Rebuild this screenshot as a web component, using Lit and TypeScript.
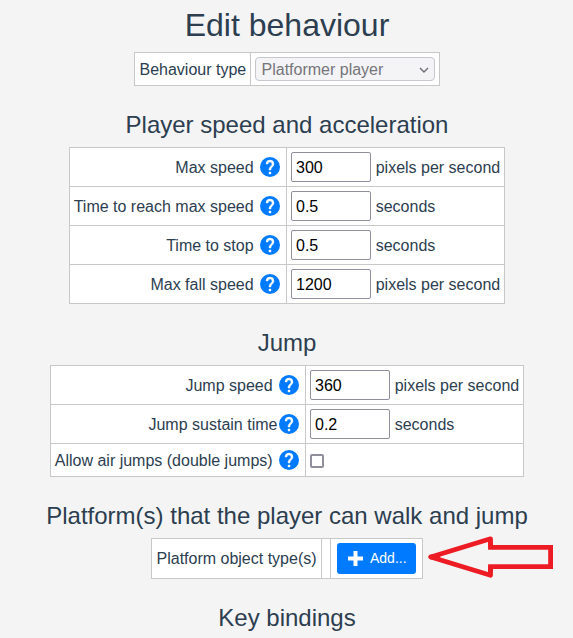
import { LitElement, html, css, svg, nothing } from "lit";
import { customElement } from "lit/decorators.js";
import { classMap } from "lit/directives/class-map.js";

interface Row {
  label: string;
  value?: string;
  unit?: string;
  tight?: boolean;
}

const speedRows: Row[] = [
  { label: "Max speed", value: "300", unit: "pixels per second" },
  { label: "Time to reach max speed", value: "0.5", unit: "seconds" },
  { label: "Time to stop", value: "0.5", unit: "seconds" },
  { label: "Max fall speed", value: "1200", unit: "pixels per second" },
];

const jumpRows: Row[] = [
  { label: "Jump speed", value: "360", unit: "pixels per second" },
  { label: "Jump sustain time", value: "0.2", unit: "seconds", tight: true },
  { label: "Allow air jumps (double jumps)" },
];

@customElement("app-root")
export class AppRoot extends LitElement {
  static styles = css`
    :host {
      display: block;
      box-sizing: border-box;
      position: relative;
      height: 638px;
      overflow: hidden;
      padding-left: 1px;
      background: #f4f4f4;
      color: #2c3e50;
      font: 16px/20px "Liberation Sans", Arial, sans-serif;
      white-space: nowrap;
    }
    * { box-sizing: border-box; }
    .page { display: flex; flex-direction: column; align-items: center; }
    h1, h2 { margin: 0; font-weight: 400; }
    h1 { height: 52px; font-size: 32px; line-height: 50px; }
    h2 { height: 32px; margin-top: 29px; font-size: 24px; line-height: 20px; }
    .sheet {
      display: grid;
      gap: 1px;
      padding: 1px;
      background: #c8c8c8;
    }
    .type { grid-template-columns: 115px 188px; grid-template-rows: 32px; }
    .speed { grid-template-columns: 216px 217px; grid-auto-rows: 38px; }
    .jump { grid-template-columns: 254px 217px; grid-template-rows: 38px 38px 32px; }
    .platform { grid-template-columns: 169px 8px 91px; grid-template-rows: 39px; }
    .cell { display: flex; align-items: center; background: #fff; padding-left: 4px; }
    .text { padding-top: 2px; }
    .name { padding-left: 4.5px; }
    .label { justify-content: flex-end; padding-right: 6px; gap: 6.4px; }
    .label.tight { gap: 1.6px; }
    .help { width: 20px; height: 20px; flex: none; display: block; }
    .field {
      width: 80px;
      height: 30px;
      margin: 0 4.7px 0 0;
      padding: 2px 0 0 4px;
      border: 1px solid #8f8f9d;
      border-radius: 2px;
      background: #fff;
      color: #000;
      font: inherit;
      outline: 0;
    }
    .check {
      appearance: none;
      width: 14px;
      height: 14px;
      margin: 2px 0 0;
      border: 2px solid #8f8f9d;
      border-radius: 2px;
      background: #fff;
    }
    .select {
      display: flex;
      align-items: center;
      justify-content: space-between;
      width: 180px;
      height: 24px;
      padding: 0 5px 0 5.5px;
      border: 1px solid #c7c7ce;
      border-radius: 4px;
      background: #f4f4f6;
      color: #75757a;
    }
    .chevron { width: 10px; height: 6px; margin-top: 1px; display: block; }
    .add {
      display: flex;
      align-items: center;
      gap: 6px;
      width: 79px;
      height: 31px;
      margin-left: 2px;
      padding: 0 0 0 10px;
      border: 0;
      border-radius: 3px;
      background: #007bff;
      color: #fff;
      font: 14px "Liberation Sans", Arial, sans-serif;
    }
    .caption { padding-bottom: 1px; }
    .plus { width: 17px; height: 17px; display: block; flex: none; }
    .arrow { position: absolute; left: 424px; top: 532px; width: 132px; height: 50px; }
  `;

  private help() {
    return html`<svg class="help" viewBox="2 2 20 20">
      ${svg`<circle cx="12" cy="12" r="10" fill="#007bff"/>
      <path fill="#fff" stroke="#fff" stroke-width=".4" d="M13 19h-2v-2h2zm2.07-7.75-.9.92C13.45 12.9 13 13.5 13 15h-2v-.5c0-1.1.45-2.1 1.17-2.83l1.24-1.26c.37-.36.59-.86.59-1.41a2 2 0 0 0-4 0H8a4 4 0 1 1 8 0c0 .88-.36 1.68-.93 2.25z"/>`}
    </svg>`;
  }

  private row(r: Row) {
    return html`
      <div class=${classMap({ cell: true, label: true, tight: !!r.tight })}><span class="text">${r.label}</span>${this.help()}</div>
      <div class="cell">
        ${r.value
          ? html`<input class="field" .value=${r.value} /><span class="text">${r.unit}</span>`
          : html`<input class="check" type="checkbox" />`}
      </div>`;
  }

  render() {
    return html`
      <div class="page">
        <h1>Edit behaviour</h1>
        <div class="sheet type">
          <div class="cell name"><span class="text">Behaviour type</span></div>
          <div class="cell">
            <div class="select">
              <span class="text">Platformer player</span>
              <svg class="chevron" viewBox="0 0 10 6"><path d="M1 1l4 4 4-4" fill="none" stroke="#6d6d73" stroke-width="1.4" /></svg>
            </div>
          </div>
        </div>
        <h2>Player speed and acceleration</h2>
        <div class="sheet speed">${speedRows.map((r) => this.row(r))}</div>
        <h2>Jump</h2>
        <div class="sheet jump">${jumpRows.map((r) => this.row(r))}</div>
        <h2>Platform(s) that the player can walk and jump</h2>
        <div class="sheet platform">
          <div class="cell name"><span>Platform object type(s)</span></div>
          <div class="cell">${nothing}</div>
          <div class="cell">
            <button class="add">
              <svg class="plus" viewBox="0 0 17 17"><path d="M6.5 1h4v5.5H16v4h-5.5V16h-4v-5.5H1v-4h5.5z" fill="#fff" /></svg>
              <span class="caption">Add...</span>
            </button>
          </div>
        </div>
        <h2>Key bindings</h2>
      </div>
      <svg class="arrow" viewBox="424 532 132 50" fill="none" stroke="#ed1c24" stroke-width="4.8">
        <path d="M490.5 547.4V538.8L430.8 557L490.5 575.2V566.6" stroke-linejoin="round" />
        <path d="M490.5 542V547.4H550.6V566.6H490.5V572" />
        <path d="M431 557H438" stroke-linecap="round" />
      </svg>
    `;
  }
}
